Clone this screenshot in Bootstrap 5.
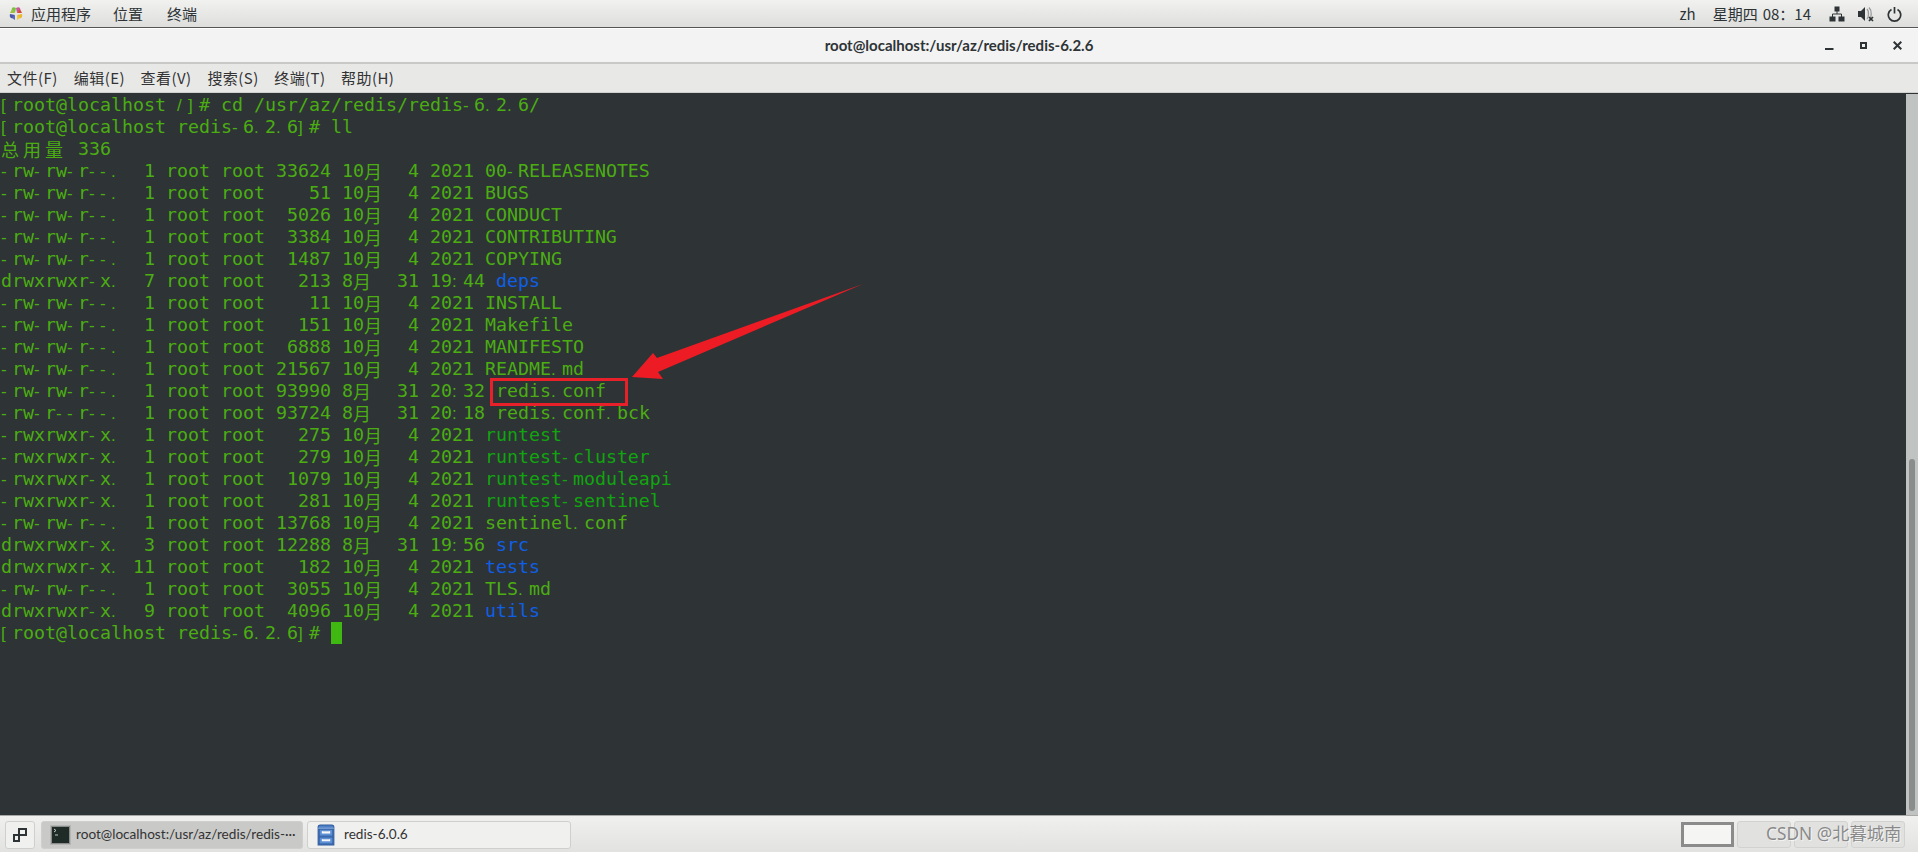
<!DOCTYPE html>
<html lang="zh">
<head>
<meta charset="utf-8">
<title>root@localhost:/usr/az/redis/redis-6.2.6</title>
<link href="https://cdn.jsdelivr.net/npm/bootstrap@5.3.0/dist/css/bootstrap.min.css" rel="stylesheet">
<style>
html,body{height:100%;overflow:hidden;}
body{font-family:"Lato","Noto Sans CJK SC",sans-serif;color:#2e3436;background:#2e3436;}
.desk{height:852px;}
.topbar{height:28px;flex:none;background:linear-gradient(#f1f1f0,#dededc);border-bottom:1px solid #555;font-family:"Noto Sans CJK SC",sans-serif;font-size:15px;padding-left:8px;padding-right:16px;color:#2e3436;}
.topbar .tb-item{line-height:26px;}
.gnomefoot{width:16px;height:16px;flex:none;margin-right:7px;}
.gapa{margin-right:22px;}
.gapb{margin-right:24px;}
.gapc{margin-right:17px;}
.gapd{margin-right:5px;}
.gape{margin-right:18px;}
.gapf{margin-right:13px;}
.gapg{margin-right:12px;}
.titlebar{height:36px;flex:none;background:#f3f3f3;border-top:1px solid #fff;border-bottom:2px solid #c8c8c6;}
.wintitle{font-size:15px;font-weight:700;color:#2e3436;}
.titlebtn{width:34px;}
.menubar{height:29px;flex:none;background:#e8e8e7;border-bottom:1px solid #cfcfcd;font-family:"Noto Sans CJK SC",sans-serif;font-size:15px;padding-left:7px;color:#333;}
.menuitem{width:66.8px;letter-spacing:.45px;}
.term{flex:1 1 auto;min-height:0;background:#2e3436;padding-top:1px;}
.tlines{flex:1 1 auto;font-family:"DejaVu Sans Mono",monospace;font-size:18.27px;color:#4bad12;line-height:22px;padding-left:1px;position:relative;overflow:hidden;}
.tl{height:22px;white-space:pre;}
.tl i{font-style:normal;display:inline-block;width:11px;font-family:"Liberation Sans",sans-serif;font-size:17px;}
.cj{display:inline-block;width:22px;font-family:"Noto Sans CJK SC",sans-serif;font-size:18px;line-height:22px;vertical-align:top;}
.dirn{color:#0e5fe6;}
.exen{color:#11a50e;}
.cursorcell{display:inline-block;width:11px;height:22px;background:#3fb911;vertical-align:top;}
.scrolltrack{width:12px;flex:none;background:#c1c3c3;display:flex;justify-content:center;}
.scrollthumb{width:6px;height:352px;margin-top:365px;background:#8b8d8d;border-radius:3px;}
.taskbar{height:37px;flex:none;background:linear-gradient(#f0f0ef,#e2e2e0);border-top:1px solid #a8a8a6;padding:4px 13px 3px 5px;}
.taskbtn{height:28px;border:1px solid #cfcfcd;border-radius:3px;background:#f0f0ef;font-size:13.6px;color:#333;}
.tb-desk{width:30px;margin-right:6px;}
.tb-w1{width:262px;margin-right:4px;background:#c9c9c8;padding-left:8px;}
.tb-w2{width:264px;padding-left:9px;}
.tskicon{flex:none;margin-right:5px;}
.ws{width:54px;height:27px;margin-left:3px;background:#e1e1e0;border:1px solid #d2d2d0;border-radius:3px;}
.ws-on{width:53px;height:25px;background:#f5f5f4;border:3px solid #8b8b8b;border-radius:0;margin-left:0;}
.arrowmark{position:absolute;left:0;top:0;pointer-events:none;}
.watermark{position:absolute;left:1766px;top:822px;font-family:"Noto Sans","Noto Sans CJK SC",sans-serif;font-size:17.3px;line-height:23px;color:rgba(120,120,120,.85);text-shadow:1px 1px 0 rgba(255,255,255,.6);white-space:nowrap;}
</style>
</head>
<body>
<div class="desk d-flex flex-column position-relative">

  <div class="topbar d-flex align-items-center">
    <svg class="gnomefoot" viewBox="0 0 16 16">
      <path d="M8 2 C5 0 3 2 4 4 L7 7Z" fill="#7cc242"/><path d="M8 2 C11 0 13 2 12 4 L9 7Z" fill="#c85a9c"/>
      <path d="M14 8 C15 11 13 13 11 12 L9 9Z" fill="#e8b830"/><path d="M2 8 C1 11 3 13 5 12 L7 9Z" fill="#4b58a8"/>
      <path d="M2 7 L7 7 L4 3Z" fill="#a0c040"/><path d="M14 7 L9 7 L12 3Z" fill="#d8483c"/>
      <path d="M7 9 L7 14 L4 12Z" fill="#5a6ac0"/><path d="M9 9 L9 14 L12 12Z" fill="#f0c840"/>
    </svg>
    <span class="tb-item gapa">应用程序</span>
    <span class="tb-item gapb">位置</span>
    <span class="tb-item">终端</span>
    <span class="tb-item ms-auto gapc">zh</span>
    <span class="tb-item gapd">星期四</span>
    <span class="tb-item gape">08：14</span>
    <svg class="gapf" width="16" height="16" viewBox="0 0 16 16"><path d="M5.500 0.500h5v5h-5zM0.500 10.500h6v5h-6zM9.500 10.500h6v5h-6z" fill="#2e3436"/><path d="M8 5v3M3.500 11V8h9v3" fill="none" stroke="#2e3436"/></svg>
    <svg class="gapg" width="17" height="16" viewBox="0 0 17 16"><path d="M0 5h3l4-4v14l-4-4H0z" fill="#2e3436"/><path d="M9 3c2 2 2 8 0 10M11 1.500c3 3 3 10 0 13" fill="none" stroke="#9a9c9c" stroke-width="1.300"/><path d="M11 11l4 4M15 11l-4 4" stroke="#2e3436" stroke-width="1.700"/></svg>
    <svg width="15" height="16" viewBox="0 0 15 16"><path d="M4.500 3.500a6.200 6.200 0 1 0 6 0M7.500 1v6.500" fill="none" stroke="#2e3436" stroke-width="1.700"/></svg>
  </div>

  <div class="titlebar d-flex align-items-center position-relative">
    <div class="wintitle flex-grow-1 text-center">root@localhost:/usr/az/redis/redis-6.2.6</div>
    <div class="d-flex align-items-center pe-1 position-absolute end-0">
      <div class="titlebtn d-flex justify-content-center"><svg width="9" height="9" viewBox="0 0 9 9"><path d="M0 7h8.500v2H0z" fill="#2e3436"/></svg></div>
      <div class="titlebtn d-flex justify-content-center"><svg width="7" height="7" viewBox="0 0 7 7"><path d="M1 1h5v5H1z" fill="none" stroke="#2e3436" stroke-width="2"/></svg></div>
      <div class="titlebtn d-flex justify-content-center"><svg width="9" height="9" viewBox="0 0 9 9"><path d="M.7.7l7.600 7.600M8.300.7L.7 8.300" stroke="#2e3436" stroke-width="2"/></svg></div>
    </div>
  </div>

  <div class="menubar d-flex align-items-center">
    <span class="menuitem">文件(F)</span><span class="menuitem">编辑(E)</span><span class="menuitem">查看(V)</span><span class="menuitem">搜索(S)</span><span class="menuitem">终端(T)</span><span class="menuitem">帮助(H)</span>
  </div>

  <div class="term d-flex">
    <div class="tlines">
<div class="tl"><i>[</i>root@localhost <i>/</i><i>]</i># cd /usr/az/redis/redis<i>-</i>6<i>.</i>2<i>.</i>6/</div>
<div class="tl"><i>[</i>root@localhost redis<i>-</i>6<i>.</i>2<i>.</i>6<i>]</i># ll</div>
<div class="tl"><span class="cj">总</span><span class="cj">用</span><span class="cj">量</span> 336</div>
<div class="tl"><i>-</i>rw<i>-</i>rw<i>-</i>r<i>-</i><i>-</i><i>.</i>  1 root root 33624 10<span class="cj">月</span>  4 2021 00<i>-</i>RELEASENOTES</div>
<div class="tl"><i>-</i>rw<i>-</i>rw<i>-</i>r<i>-</i><i>-</i><i>.</i>  1 root root    51 10<span class="cj">月</span>  4 2021 BUGS</div>
<div class="tl"><i>-</i>rw<i>-</i>rw<i>-</i>r<i>-</i><i>-</i><i>.</i>  1 root root  5026 10<span class="cj">月</span>  4 2021 CONDUCT</div>
<div class="tl"><i>-</i>rw<i>-</i>rw<i>-</i>r<i>-</i><i>-</i><i>.</i>  1 root root  3384 10<span class="cj">月</span>  4 2021 CONTRIBUTING</div>
<div class="tl"><i>-</i>rw<i>-</i>rw<i>-</i>r<i>-</i><i>-</i><i>.</i>  1 root root  1487 10<span class="cj">月</span>  4 2021 COPYING</div>
<div class="tl">drwxrwxr<i>-</i>x<i>.</i>  7 root root   213 8<span class="cj">月</span>  31 19<i>:</i>44 <span class="dirn">deps</span></div>
<div class="tl"><i>-</i>rw<i>-</i>rw<i>-</i>r<i>-</i><i>-</i><i>.</i>  1 root root    11 10<span class="cj">月</span>  4 2021 INSTALL</div>
<div class="tl"><i>-</i>rw<i>-</i>rw<i>-</i>r<i>-</i><i>-</i><i>.</i>  1 root root   151 10<span class="cj">月</span>  4 2021 Makefile</div>
<div class="tl"><i>-</i>rw<i>-</i>rw<i>-</i>r<i>-</i><i>-</i><i>.</i>  1 root root  6888 10<span class="cj">月</span>  4 2021 MANIFESTO</div>
<div class="tl"><i>-</i>rw<i>-</i>rw<i>-</i>r<i>-</i><i>-</i><i>.</i>  1 root root 21567 10<span class="cj">月</span>  4 2021 README<i>.</i>md</div>
<div class="tl"><i>-</i>rw<i>-</i>rw<i>-</i>r<i>-</i><i>-</i><i>.</i>  1 root root 93990 8<span class="cj">月</span>  31 20<i>:</i>32 redis<i>.</i>conf</div>
<div class="tl"><i>-</i>rw<i>-</i>r<i>-</i><i>-</i>r<i>-</i><i>-</i><i>.</i>  1 root root 93724 8<span class="cj">月</span>  31 20<i>:</i>18 redis<i>.</i>conf<i>.</i>bck</div>
<div class="tl"><i>-</i>rwxrwxr<i>-</i>x<i>.</i>  1 root root   275 10<span class="cj">月</span>  4 2021 <span class="exen">runtest</span></div>
<div class="tl"><i>-</i>rwxrwxr<i>-</i>x<i>.</i>  1 root root   279 10<span class="cj">月</span>  4 2021 <span class="exen">runtest<i>-</i>cluster</span></div>
<div class="tl"><i>-</i>rwxrwxr<i>-</i>x<i>.</i>  1 root root  1079 10<span class="cj">月</span>  4 2021 <span class="exen">runtest<i>-</i>moduleapi</span></div>
<div class="tl"><i>-</i>rwxrwxr<i>-</i>x<i>.</i>  1 root root   281 10<span class="cj">月</span>  4 2021 <span class="exen">runtest<i>-</i>sentinel</span></div>
<div class="tl"><i>-</i>rw<i>-</i>rw<i>-</i>r<i>-</i><i>-</i><i>.</i>  1 root root 13768 10<span class="cj">月</span>  4 2021 sentinel<i>.</i>conf</div>
<div class="tl">drwxrwxr<i>-</i>x<i>.</i>  3 root root 12288 8<span class="cj">月</span>  31 19<i>:</i>56 <span class="dirn">src</span></div>
<div class="tl">drwxrwxr<i>-</i>x<i>.</i> 11 root root   182 10<span class="cj">月</span>  4 2021 <span class="dirn">tests</span></div>
<div class="tl"><i>-</i>rw<i>-</i>rw<i>-</i>r<i>-</i><i>-</i><i>.</i>  1 root root  3055 10<span class="cj">月</span>  4 2021 TLS<i>.</i>md</div>
<div class="tl">drwxrwxr<i>-</i>x<i>.</i>  9 root root  4096 10<span class="cj">月</span>  4 2021 <span class="dirn">utils</span></div>
<div class="tl"><i>[</i>root@localhost redis<i>-</i>6<i>.</i>2<i>.</i>6<i>]</i># <span class="cursorcell"></span></div>
    </div>
    <div class="scrolltrack"><div class="scrollthumb"></div></div>
  </div>

  <div class="taskbar d-flex align-items-center">
    <div class="taskbtn tb-desk d-flex align-items-center justify-content-center">
      <svg width="14" height="14" viewBox="0 0 14 14"><path d="M6 1h7v6H6zM1 7h5v6H1z" fill="none" stroke="#2e3436" stroke-width="2"/></svg>
    </div>
    <div class="taskbtn tb-w1 d-flex align-items-center">
      <svg class="tskicon" width="21" height="20" viewBox="0 0 21 20"><rect x=".5" y=".5" width="20" height="19" fill="#8a8c8a" stroke="#b5b5b5"/><rect x="2" y="2" width="17" height="16" fill="#1f2b27"/><path d="M4 4l2 1.500L4 7M5 10h3" fill="none" stroke="#d8d8d8" stroke-width=".9"/></svg>
      <span class="text-nowrap">root@localhost:/usr/az/redis/redis-···</span>
    </div>
    <div class="taskbtn tb-w2 d-flex align-items-center">
      <svg class="tskicon" width="18" height="22" viewBox="0 0 17 21"><path d="M1 3q0-2 2-2h11q2 0 2 2v17H1z" fill="#4e7fc4" stroke="#2f5a9c"/><path d="M1 4h15" stroke="#8fb2e2"/><rect x="2" y="5" width="13" height="6.500" fill="#5c8fd4" stroke="#2f5a9c" stroke-width=".7"/><rect x="2" y="12.500" width="13" height="6.500" fill="#5c8fd4" stroke="#2f5a9c" stroke-width=".7"/><path d="M5 7v1.500h7V7M5 14.500V16h7v-1.500" fill="#eee" stroke="#fff"/></svg>
      <span class="ms-1">redis-6.0.6</span>
    </div>
    <div class="ms-auto d-flex align-items-center">
      <div class="ws ws-on"></div><div class="ws"></div><div class="ws"></div><div class="ws"></div>
    </div>
  </div>

  <svg class="arrowmark" width="1918" height="852" viewBox="0 0 1918 852">
    <rect x="491.500" y="379.500" width="135" height="25" fill="none" stroke="#e8202a" stroke-width="3"/>
    <polygon points="863,284 657,358 653,353 632,377 663,379 658,372" fill="#ed1c24"/>
  </svg>
  <div class="watermark">CSDN @北暮城南</div>
</div>
<script src="https://cdn.jsdelivr.net/npm/bootstrap@5.3.0/dist/js/bootstrap.bundle.min.js"></script>
</body>
</html>
